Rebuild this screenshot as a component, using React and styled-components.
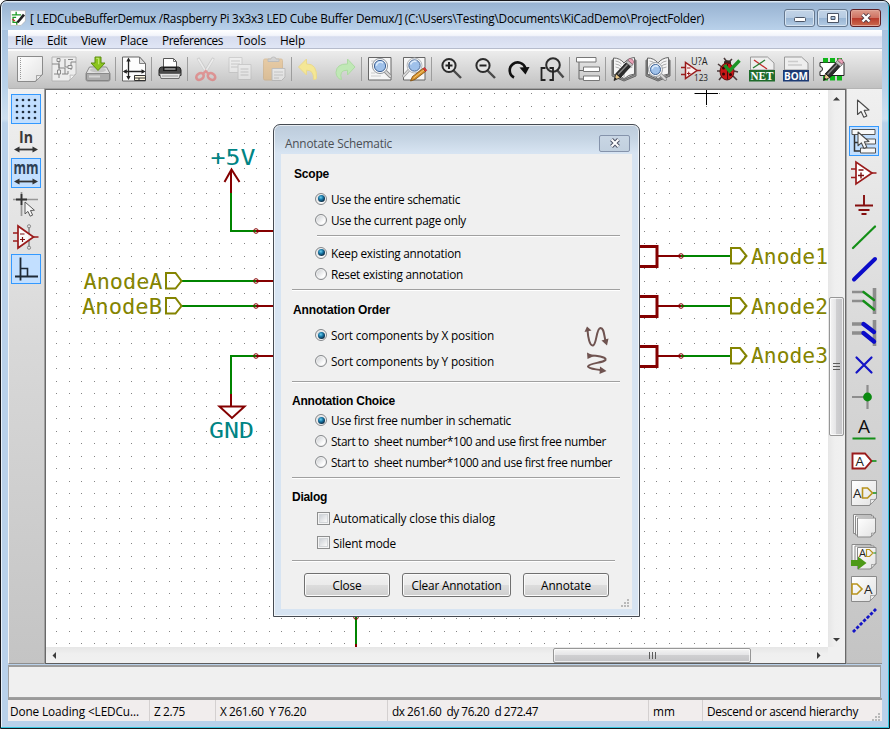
import React, { useLayoutEffect, useRef, useState } from 'react';
import styled, { createGlobalStyle, css } from 'styled-components';

const GlobalStyle = createGlobalStyle`
  * { box-sizing: border-box; }
  html, body { margin: 0; padding: 0; background: #fff; overflow: hidden; }
  body { font: 12px 'Open Sans', 'Noto Sans', sans-serif; color: #000; }
`;

/* ---------- text fitted to a measured width ---------- */

const FitSpan = styled.span`
  display: inline-block;
  white-space: pre;
  line-height: 16px;
  flex: none;
`;

function Fit({ w, children }) {
  const ref = useRef(null);
  const [spacing, setSpacing] = useState(0);
  useLayoutEffect(() => {
    const natural = ref.current.getBoundingClientRect().width;
    setSpacing((w - natural) / String(children).length);
  }, [w, children]);
  return (
    <FitSpan ref={ref} style={{ letterSpacing: `${spacing}px` }}>
      {children}
    </FitSpan>
  );
}

/* ---------- window frame ---------- */

const Window = styled.div`
  position: relative;
  display: flex;
  flex-direction: column;
  width: 890px;
  height: 729px;
  padding: 0 7px;
  border: 1px solid #17171c;
  border-radius: 7px 7px 0 0;
  background: linear-gradient(#99b4d1 0, #a9c3e0 30px, #bcd4ea 90px, #cfe0f0 118px, #b9d1ea 122px);
  box-shadow: inset -1px -1px 0 #35c6de, inset 1px 1px 0 #e8f1fa;
  font-size: 11.8px;
`;

const TitleBar = styled.div`
  display: flex;
  align-items: center;
  height: 29px;
  background: linear-gradient(#dbe7f3 0 1px, #98b3d2 2px, #b9d1ea 100%);
  margin: 0 -6px;
  padding: 5px 7px 0 8px;
  border-radius: 6px 6px 0 0;
`;

const Title = styled.div`
  flex: 1;
  padding-left: 4px;
`;

const Captions = styled.div`
  display: flex;
  gap: 2px;
`;

const CaptionButton = styled.div`
  display: flex;
  align-items: center;
  justify-content: center;
  width: 31px;
  height: 18px;
  border: 1px solid ${(p) => (p.$danger ? '#5e1f25' : '#65788f')};
  border-radius: 3px;
  box-shadow: inset 0 0 0 1px ${(p) => (p.$danger ? '#e2a597' : '#d7e4f1')};
  background: ${(p) =>
    p.$danger
      ? 'linear-gradient(#dd9c8c, #cf7262 48%, #b8392a 50%, #cb6a4e)'
      : 'linear-gradient(#c3d4e7, #b6cbe2 48%, #98b4d3 50%, #b4cce4)'};
`;

const MenuBar = styled.div`
  display: flex;
  align-items: center;
  gap: 14px;
  height: 19px;
  padding: 1px 7px 0;
  border-bottom: 1px solid #b6bccc;
  background: linear-gradient(#fff, #f3f5fb 30%, #d6dcee 38%, #e0e6f5);
`;

const ToolBar = styled.div`
  display: flex;
  align-items: center;
  height: 39px;
  padding: 0 5px 1px;
  border-top: 2px solid #fbfbfb;
  background: linear-gradient(#ececec, #d9d9d9 45%, #c1c1c1);
`;

const ToolButton = styled.div`
  display: flex;
  align-items: center;
  justify-content: center;
  width: 34px;
  height: 34px;
  opacity: ${(p) => (p.$faded ? 0.4 : 1)};
  svg { display: block; }
`;

const ToolSep = styled.div`
  width: 2px;
  height: 24px;
  border-left: 1px solid #9d9d9d;
`;

const Middle = styled.div`
  display: flex;
  height: 576px;
`;

const SideBar = styled.div`
  display: flex;
  flex-direction: column;
  align-items: center;
  gap: 2px;
  width: 36px;
  padding-top: 5px;
  padding-right: 1px;
  border-top: 1px solid #b4b4b4;
  border-bottom: 1px solid #8e8e8e;
  border-left: 1px solid ${(p) => (p.$side === 'right' ? '#a9a9a9' : '#f4f4f4')};
  background: linear-gradient(#f0f0f0, #d8d8d8 45%, #c4c4c4);
`;

const SideButton = styled.div`
  display: flex;
  align-items: center;
  justify-content: center;
  width: 30px;
  height: 30px;
  flex: none;
  ${(p) =>
    p.$on &&
    css`
      border: 1px solid #3399ff;
      background: #c2dfff;
    `}
  svg { display: block; flex: none; }
`;

const CanvasFrame = styled.div`
  flex: 1;
  display: grid;
  grid-template: 557px 16px / 782px 17px;
  border-style: solid;
  border-width: 1px 0 0 1px;
  border-color: #a0a0a0;
  box-shadow: inset 1px 1px 0 #696969, inset 0 -1px 0 #5d5d5d, inset -1px 0 0 #696969;
  padding: 1px;
  background: #f0f0f0;
`;

const Sheet = styled.svg`
  display: block;
  background: #fff;
`;

const ScrollTrack = styled.div`
  display: flex;
  align-items: center;
  flex-direction: ${(p) => (p.$vertical ? 'column' : 'row')};
  background: linear-gradient(${(p) => (p.$vertical ? '90deg' : '180deg')}, #e6e6e6, #efefef 40%, #f1f1f1);
  ${(p) => (p.$vertical ? 'padding: 0 1px 0 0;' : '')}
`;

const ScrollEnd = styled.div`
  display: flex;
  align-items: center;
  justify-content: center;
  width: 16px;
  height: 16px;
`;

const ScrollGap = styled.div`
  flex: 0 0 ${(p) => p.$size}px;
`;

const Thumb = styled.div`
  display: flex;
  align-items: center;
  justify-content: center;
  flex: 0 0 ${(p) => p.$size}px;
  ${(p) => (p.$vertical ? 'width: 15px;' : 'height: 15px;')}
  border: 1px solid #979797;
  border-radius: 2px;
  box-shadow: inset 0 0 0 1px rgba(255, 255, 255, 0.7);
  background: linear-gradient(${(p) => (p.$vertical ? '90deg' : '180deg')}, #f4f4f4, #e4e4e6 48%, #cfcfd1 50%, #c5c5c8);
`;

const MessagePanel = styled.div`
  height: 33px;
  border: 1px solid #a0a0a0;
  border-top: 2px solid #9c9c9c;
  background: #f0f0f0;
  margin-top: 1px;
  margin-right: 1px;
`;

const StatusBar = styled.div`
  display: grid;
  grid-template-columns: 141px 66px 172px 261px 54px 1fr;
  align-items: stretch;
  height: 23px;
  border-top: 2px solid #9a9a9a;
  background: #f1eded;
`;

const StatusCell = styled.div`
  display: flex;
  align-items: center;
  padding: 1px 0 0 ${(p) => (p.$first ? 2 : 4)}px;
  border-left: ${(p) => (p.$first ? '0' : '1px solid #d4d0d0')};
`;

const StatusGrip = styled.div`
  margin: auto 1px 0 auto;
  height: 12px;
`;

/* ---------- dialog ---------- */

const Dialog = styled.div`
  position: absolute;
  left: 272px;
  top: 123px;
  width: 367px;
  height: 493px;
  padding: 0 7px 7px;
  border: 1px solid #454a52;
  border-radius: 7px 7px 0 0;
  background: linear-gradient(#bccbdb, #c6d5e4 14px, #d7e4f2 28px);
  box-shadow: inset 0 0 0 1px rgba(255, 255, 255, 0.65);
`;

const DialogTitle = styled.div`
  display: flex;
  align-items: center;
  justify-content: space-between;
  height: 29px;
  padding: 7px 2px 0 4px;
  color: #4b4f54;
`;

const DialogClose = styled.div`
  display: flex;
  align-items: center;
  justify-content: center;
  width: 31px;
  height: 17px;
  border: 1px solid #8593ab;
  border-radius: 2px;
  background: linear-gradient(#c9d6e4, #c1d0df);
`;

const DialogBody = styled.div`
  height: 455px;
  padding: 10px 11px 0;
  background: #f0f0f0;
`;

const Section = styled.div`
  height: ${(p) => p.$height}px;
`;

const Heading = styled.div`
  height: 20px;
  padding-left: ${(p) => p.$indent || 0}px;
  font: bold 12px 'Liberation Sans', Arial, sans-serif;
  display: flex;
  align-items: center;
`;

const Option = styled.div`
  display: flex;
  align-items: center;
  gap: ${(p) => (p.$check ? 3 : 4)}px;
  height: ${(p) => p.$height || 21}px;
  padding-left: ${(p) => (p.$check ? 25 : 23)}px;
`;

const OptionBlock = styled.div`
  padding-top: ${(p) => p.$top || 0}px;
`;

const SortRow = styled.div`
  display: flex;
  justify-content: space-between;
  align-items: flex-start;
  padding-right: 11px;
`;

const SortArt = styled.svg`
  display: block;
  margin-top: 5px;
`;

const Radio = styled.span`
  display: flex;
  align-items: center;
  justify-content: center;
  width: 12px;
  height: 12px;
  border: 1px solid #85888b;
  border-radius: 50%;
  background: linear-gradient(135deg, #c6c9cd, #fdfdfd 70%);
  box-shadow: inset 0 0 0 1px #f2f2f2;
  &::after {
    content: '';
    display: ${(p) => (p.$on ? 'block' : 'none')};
    width: 7px;
    height: 7px;
    border-radius: 50%;
    background: radial-gradient(circle at 40% 35%, #6ed0ee 0, #1878a8 35%, #0c2c45 72%);
  }
`;

const Check = styled.span`
  width: 13px;
  height: 13px;
  border: 1px solid #8e8f8f;
  background: linear-gradient(135deg, #c0c5cc, #f6f6f6 75%);
  box-shadow: inset 0 0 0 1px #f4f4f4, inset 0 0 0 2px #d3d6d9;
`;

const Rule = styled.div`
  height: 2px;
  margin-left: ${(p) => p.$left || 0}px;
  width: ${(p) => p.$width}px;
  border-top: 1px solid #a0a0a0;
  border-bottom: 1px solid #fff;
`;

const Actions = styled.div`
  display: flex;
  gap: 12px;
  padding: 11px 0 0 12px;
`;

const Button = styled.div`
  display: flex;
  align-items: center;
  justify-content: center;
  width: ${(p) => p.$width}px;
  height: 24px;
  border: 1px solid #707070;
  border-radius: 3px;
  box-shadow: inset 0 0 0 1px #fbfbfb;
  background: linear-gradient(#f2f2f2, #ebebeb 48%, #dddddd 50%, #cfcfcf);
`;

const DialogGrip = styled.div`
  display: flex;
  justify-content: flex-end;
  padding-top: 2px;
  margin-right: -9px;
`;

/* ---------- icon helpers ---------- */

const IconSvg = styled.svg`
  overflow: visible;
`;

const Ico = ({ children }) => (
  <IconSvg width="26" height="26" viewBox="0 0 26 26" fill="none">
    {children}
  </IconSvg>
);

const Page = ({ x = 0.5, y = 0.5, w = 25, h = 25, f = 7, stroke = '#8a8a8a', fill = 'url(#paper)' }) => (
  <g strokeLinejoin="round">
    <path d={`M${x} ${y}h${w}v${h - f}l${-f} ${f}h${f - w}z`} fill={fill} stroke={stroke} />
    <path d={`M${x + w} ${y + h - f}q-2 2-${f - 1} 1q1 4-1 ${f - 1}z`} fill="#f4f4f4" stroke={stroke} strokeWidth=".8" />
  </g>
);

const Paper = () => (
  <linearGradient id="paper" x1="0" y1="0" x2="1" y2="1">
    <stop offset="0" stopColor="#ffffff" />
    <stop offset="1" stopColor="#e2e2e2" />
  </linearGradient>
);

const Lens = ({ x, y, r }) => (
  <g>
    <path d={`M${x + r * 0.7} ${y + r * 0.7}l5.5 5.5`} stroke="#8f8f8f" strokeWidth="3.6" strokeLinecap="round" />
    <path d={`M${x + r * 0.7} ${y + r * 0.7}l5.5 5.5`} stroke="#dadada" strokeWidth="1.8" strokeLinecap="round" />
    <circle cx={x} cy={y} r={r} fill="#a9c8ec" stroke="#f5f5f5" strokeWidth="2.6" />
    <circle cx={x} cy={y} r={r + 1} stroke="#7d848b" strokeWidth=".8" />
    <circle cx={x} cy={y} r={r - 1} fill="#9fc1ea" stroke="#3f6396" strokeWidth="1" />
    <path d={`M${x - r * 0.55} ${y - 0.3}a${r * 0.6} ${r * 0.6} 0 0 1 ${r} -${r * 0.4}`} stroke="#dcebfb" strokeWidth="1.6" />
  </g>
);

const Book = () => (
  <g stroke="#666" strokeLinejoin="round">
    <path d="M1 4.500l1-1v15l11 5 11-5V3.500l1 1V20l-12 5L1 20z" fill="#999" />
    <path d="M2.500 2Q9 2 13 7Q17 2 23.500 1.500V18Q17 18.500 13 23Q9 18.500 2.500 18.500z" fill="#f5f5f5" />
    <path d="M13 7V23M4.500 5q4 .5 6 3M4.500 8q4 .5 6 3M15.500 8q2-2.500 6-3M15.500 11q2-2.500 6-3M15.500 14q2-2.500 6-3M4.500 11q4 .5 6 3" stroke="#9a9a9a" strokeWidth=".8" />
  </g>
);

const Pencil = () => (
  <g>
    <path d="M3 24.500L5 17.500L9.500 21.500z" fill="#e9c88a" stroke="#222" strokeWidth=".8" />
    <path d="M3 24.500l1-3 1.800 1.600z" fill="#111" />
    <path d="M5 17.500L15 7L19.500 10.500L9.500 21.500z" fill="#2c2c2c" stroke="#111" strokeWidth=".8" />
    <path d="M7 18.500L16.500 8.500" stroke="#888" strokeWidth="1.400" />
    <path d="M15 6.500l2-2.200 5 4.200-2 2z" fill="#c4c4c4" stroke="#555" strokeWidth=".7" />
    <path d="M17 4.300l1.500-1.800q3-.5 4.500 3.500l-1.500 2.200z" fill="#e9a3b8" stroke="#8d5968" strokeWidth=".7" />
  </g>
);

const Cursor = ({ x, y, s = 1 }) => (
  <path
    transform={`translate(${x} ${y}) scale(${s})`}
    d="M0 0L0 14.500L3.600 11.500L6.300 17.300L9.300 16L6.700 10.400L11.500 10z"
    fill="#f6f6f6"
    stroke="#4a4a4a"
    strokeWidth="1.1"
    strokeLinejoin="round"
  />
);

const GlyphText = ({ children, x, y, size = 10, fill = '#222', weight = 400, len, font = 'Open Sans' }) => (
  <text
    x={x}
    y={y}
    fontSize={size}
    fontWeight={weight}
    fill={fill}
    stroke="none"
    textLength={len}
    lengthAdjust="spacingAndGlyphs"
    fontFamily={`'${font}', sans-serif`}
  >
    {children}
  </text>
);

const Glass = ({ minus }) => (
  <g transform="translate(2.500 .5)">
    <path d="M14 14l7.500 7.500" stroke="#4a4a4a" strokeWidth="2.400" />
    <circle cx="9.500" cy="9" r="6.600" stroke="#2c2c2c" strokeWidth="2" fill="#e3e3e3" />
    <path d={minus ? 'M6 9h7' : 'M6 9h7M9.500 5.500v7'} stroke="#222" strokeWidth="2" />
  </g>
);

/* ---------- top toolbar icons ---------- */

const NewIcon = () => (
  <Ico>
    <defs><Paper /></defs>
    <Page />
    <path d="M3.500 2v22" stroke="#999" strokeDasharray="1 1" />
  </Ico>
);

const OpenIcon = () => (
  <Ico>
    <Page x={1} y={1} w={24} h={24} stroke="#b4b4b4" fill="#ededed" />
    <path d="M1 8h7v4h6M8 4v18M14 3v8h6V6h5M14 12v6M11 18h6v-3M3 18h5M20 11v3M17 3.500h5" stroke="#858585" />
    <path d="M6 2.500h3v3H6zM6.500 14h3v4h-3zM17 9.500h4v3h-4z" fill="#eee" stroke="#8c8c8c" />
  </Ico>
);

const SaveIcon = () => (
  <Ico>
    <path d="M4.500 11h17l3.500 6.500v6q0 1.500-1.500 1.500h-21Q1 25 1 23.500v-6z" fill="#e2e2e2" stroke="#8a8a8a" />
    <path d="M1.500 17.500h23v5.500q0 1.500-1.500 1.500H3q-1.500 0-1.500-1.500z" fill="#adadad" stroke="#7a7a7a" strokeWidth=".8" />
    <path d="M4 20.500h11" stroke="#d5d5d5" strokeWidth="2" />
    <ellipse cx="13" cy="14" rx="8" ry="2.500" fill="#c6c6c6" />
    <path d="M10 1h6v6h4l-7 7.500L6 7h4z" fill="#8bc41d" stroke="#5d8c12" />
    <path d="M11.300 2.300h2.400v6" stroke="#c9ec7d" />
  </Ico>
);

const PageSetupIcon = () => (
  <Ico>
    <path d="M1.500 1h17l6 6.500V25h-23z" fill="#fdfdfd" stroke="#666" />
    <path d="M18.500 1v6.500h6z" fill="#ddd" stroke="#666" strokeWidth=".8" />
    <path d="M7.500 3v19M3 15.500h20" stroke="#222" strokeWidth="1.300" />
    <path d="M7.500 1.500l-2.200 4h4.400zM7.500 24l-2.200-4h4.400zM1.800 15.500l4-2.200v4.400zM24.500 15.500l-4-2.200v4.400z" fill="#222" />
    <path d="M13.500 19.500h11v5h-11zM13.500 22h11M18 22v2.500" fill="#fff8e0" stroke="#333" />
  </Ico>
);

const PrintIcon = () => (
  <Ico>
    <path d="M6.500 12V2.500h10l3 3V12z" fill="#fff" stroke="#555" />
    <path d="M16.500 2.500v3h3" stroke="#777" />
    <path d="M4.500 11h17q2 0 2.500 3v5.500H2V14q.5-3 2.500-3z" fill="#4a4a4a" stroke="#222" />
    <path d="M6 11h14v4H6z" fill="#1b1b1b" />
    <path d="M7.500 13h11" stroke="#eee" />
    <path d="M2.500 17.500h21l-1.500 5H4z" fill="#e4e4e4" stroke="#555" strokeWidth=".8" />
    <path d="M5 20h16" stroke="#999" />
  </Ico>
);

const CutIcon = () => (
  <Ico>
    <path d="M5 2l9.500 16M20.500 2L11 18" stroke="#b0b0b0" strokeWidth="3" />
    <path d="M5.300 3l9 15M20.200 3L11 18" stroke="#fff" strokeWidth="1.600" />
    <ellipse cx="7" cy="20.500" rx="4" ry="3" transform="rotate(-35 7 20.500)" stroke="#ee3a3a" strokeWidth="2.600" />
    <ellipse cx="18.500" cy="20.500" rx="4" ry="3" transform="rotate(35 18.500 20.500)" stroke="#ee3a3a" strokeWidth="2.600" />
    <path d="M10 18l2.700-3 2.700 3" stroke="#ee3a3a" strokeWidth="2.500" />
  </Ico>
);

const CopyIcon = () => (
  <Ico>
    <path d="M2 1.500h13v15H2z" fill="#fff" stroke="#b0b0b0" />
    <path d="M4 5h9M4 8h9M4 11h9" stroke="#c4c4c4" strokeWidth="1.500" />
    <path d="M11 8.500h13v15H11z" fill="#fff" stroke="#b0b0b0" />
    <path d="M13.500 13h8M13.500 16h8M13.500 19h8" stroke="#c4c4c4" strokeWidth="1.500" />
  </Ico>
);

const PasteIcon = () => (
  <Ico>
    <rect x="2.500" y="3" width="19" height="21" rx="1.500" fill="#efa94a" stroke="#cc9040" />
    <path d="M7 5.500V3h3q0-2 2.500-2T15 3h3v2.500z" fill="#bbb" stroke="#888" />
    <path d="M11 12.500h13V21l-3.500 3.500H11z" fill="#fff" stroke="#999" />
    <path d="M13 16h9M13 19h9M13 22h5" stroke="#aaa" />
  </Ico>
);

const UndoIcon = () => (
  <Ico>
    <path d="M9.500 3v5q11-.5 10 14.500q0 1-3 1Q17 14 9.500 14.200V19L1.500 11z" fill="#f4e795" stroke="#ead98d" strokeLinejoin="round" />
  </Ico>
);

const RedoIcon = () => (
  <Ico>
    <path d="M16.500 3v5q-11-.5-11.500 8.500q.5 6 5.500 7Q7.500 14 16.500 14.200V19L24 11z" fill="#c0e8b6" stroke="#aedba3" strokeLinejoin="round" />
  </Ico>
);

const FindIcon = () => (
  <Ico>
    <path d="M1.500 1.500h22.500v22.500H1.500z" fill="#f6f6f6" stroke="#666" />
    <path d="M4 5h4M4 8h3M4 17h4M4 20h10" stroke="#ccc" />
    <Lens x={13} y={10} r={6.600} />
  </Ico>
);

const ReplaceIcon = () => (
  <Ico>
    <path d="M2.500 1.500h21.500v22.500H2.500z" fill="#f6f6f6" stroke="#666" />
    <path d="M8 14L2.500 20" stroke="#999" strokeWidth="3" strokeLinecap="round" />
    <path d="M8 14L2.500 20" stroke="#ddd" strokeWidth="1.500" strokeLinecap="round" />
    <circle cx="13.500" cy="9.500" r="6.500" fill="#9fc1ea" stroke="#f0f0f0" strokeWidth="2.400" />
    <circle cx="13.500" cy="9.500" r="7.500" stroke="#9a9fa5" strokeWidth=".7" />
    <circle cx="13.500" cy="9.500" r="5.600" stroke="#3f6396" strokeWidth="1" />
    <path d="M9.500 8.500a4.500 4.500 0 0 1 6-3" stroke="#dcebfb" strokeWidth="1.600" />
    <path d="M9.500 25l2-4.500L22 12.500l2.500 3L14 23.500z" fill="#d89229" stroke="#7b4a0c" strokeWidth=".8" />
    <path d="M22 12.500l1.500-1 2.300 2.800-1.300 1.200z" fill="#e33" stroke="#922" strokeWidth=".6" />
    <path d="M12.500 22L23 14" stroke="#f3c878" />
  </Ico>
);

const ZoomInIcon = () => <Ico><Glass /></Ico>;
const ZoomOutIcon = () => <Ico><Glass minus /></Ico>;

const RedrawIcon = () => (
  <Ico>
    <path d="M9 21.500A8 8 0 1 1 20.500 12.500" stroke="#111" strokeWidth="2.600" />
    <path d="M14.500 11.500l10-.5-4 7.500z" fill="#111" />
  </Ico>
);

const ZoomFitIcon = () => (
  <Ico>
    <path d="M18 14l6.500 7.500" stroke="#4a4a4a" strokeWidth="2.400" />
    <circle cx="14" cy="9" r="6.800" stroke="#2c2c2c" strokeWidth="2" fill="#dcdcdc" />
    <path d="M6.500 12h-4v12h4M10.500 12h3.500v12h-3.500" stroke="#222" strokeWidth="1.800" />
  </Ico>
);

const HierarchyIcon = () => (
  <Ico>
    <path d="M4 6v17h5M4 14.500h5" stroke="#666" />
    <g fill="#fff" stroke="#777">
      <path d="M1.500 1.500h19.500v4.500H1.500zM8.500 11h16v4.500h-16zM8.500 20h16v4.500h-16z" />
    </g>
  </Ico>
);

const LibEditIcon = () => <Ico><Book /><Pencil /></Ico>;
const LibViewIcon = () => <Ico><Book /><Lens x={10.500} y={13.500} r={6} /></Ico>;

const AnnotateIcon = () => (
  <Ico>
    <path d="M4.500 6.500v16l11.500-8z" fill="#fbeeee" stroke="#9a1b1b" strokeWidth="1.500" />
    <path d="M0 11.500h4M0 18.500h4M16 14.500h4" stroke="#9a1b1b" strokeWidth="1.300" />
    <path d="M6 12h3.500M6 17.500h3.500M7.700 15.700v3.600" stroke="#9a1b1b" />
    <GlyphText x={10} y={8.500} size={10} len={16.500}>U?A</GlyphText>
    <GlyphText x={13} y={25} size={9.500} len={14}>123</GlyphText>
  </Ico>
);

const BugIcon = () => (
  <Ico>
    <path d="M3 8l5 4M2 15h6M4 24l4-5M9 2l3 4M17 3l-3 3M19 15l4 1M18 20l4 4" stroke="#4a3a3a" strokeWidth="1.600" />
    <path d="M9 5.500q3.500-2.500 7 0v3H9z" fill="#3b2a26" />
    <ellipse cx="12" cy="15.500" rx="7" ry="8.500" fill="#c91616" stroke="#5f0c0c" />
    <path d="M12.500 8v15.500" stroke="#490a0a" />
    <circle cx="8.500" cy="12" r="1.500" fill="#380606" />
    <circle cx="8.500" cy="18" r="1.500" fill="#380606" />
    <circle cx="15.500" cy="18.500" r="1.500" fill="#380606" />
    <path d="M9.500 9l5 6L24.500 4.500" stroke="#1c9426" strokeWidth="3.400" />
  </Ico>
);

const NetIcon = () => (
  <Ico>
    <path d="M1.500 14V1h17l6.500 6v7z" fill="#eee" stroke="#999" />
    <path d="M5 4l13 9" stroke="#c02828" strokeWidth="1.300" />
    <path d="M4 12L16 4" stroke="#2a7d32" strokeWidth="1.300" />
    <path d="M0 14h26v11.500H0z" fill="#1f6b2b" />
    <GlyphText x={1.500} y={24} size={12.500} weight={700} fill="#fff" len={23} font="Liberation Serif">NET</GlyphText>
  </Ico>
);

const BomIcon = () => (
  <Ico>
    <path d="M1.500 14V1h17l6.500 6v7z" fill="#eee" stroke="#999" />
    <path d="M5 5.500h10M5 9h14" stroke="#ccc" strokeWidth="1.500" />
    <path d="M0 14h26v11.500H0z" fill="#1d3b75" />
    <GlyphText x={1} y={23.800} size={11} weight={700} fill="#fff" len={24}>BOM</GlyphText>
  </Ico>
);

const FootprintIcon = () => (
  <Ico>
    <path d="M1 6.500h24v13H1v-4q2.500 0 2.500-2.500T1 10.500z" fill="#fff" stroke="#222" />
    <path d="M4 2h5v4.500H4zM11 2h5v4.500h-5zM18 2h5v4.500h-5zM4 20h5v4.500H4zM11 20h5v4.500h-5zM18 20h5v4.500h-5z" fill="#10b51a" />
    <g transform="translate(1.500 0)"><Pencil /></g>
  </Ico>
);

/* ---------- side bar icons ---------- */

const GridIcon = () => (
  <Ico>
    {[4, 10, 16, 22].map((y) =>
      [4, 10, 16, 22].map((x) => <circle key={`${x}-${y}`} cx={x} cy={y} r="1.350" fill="#22303f" />)
    )}
  </Ico>
);

const Arrows = () => (
  <g>
    <path d="M4 21.500h18" stroke="#333" strokeWidth="1.800" />
    <path d="M1 21.500l5.500-3v6zM25 21.500l-5.500-3v6z" fill="#333" />
  </g>
);

const InchIcon = () => (
  <Ico>
    <GlyphText x={6} y={15} size={16} weight={700} fill="#3a3a3a" len={14}>In</GlyphText>
    <Arrows />
  </Ico>
);

const MmIcon = () => (
  <Ico>
    <GlyphText x={0.500} y={14} size={17} weight={700} fill="#2c4055" len={25}>mm</GlyphText>
    <Arrows />
  </Ico>
);

const CursorShapeIcon = () => (
  <Ico>
    <path d="M0 7.500h25M8.500 0v24" stroke="#979797" strokeWidth="1.700" />
    <path d="M3 7.500h11M8.500 2v11" stroke="#333" strokeWidth="1.800" />
    <Cursor x={12} y={10} s={0.820} />
  </Ico>
);

const HiddenPinIcon = () => (
  <Ico>
    <path d="M16 3v20" stroke="#888" strokeWidth="1.500" />
    <circle cx="16" cy="2.300" r="1.600" stroke="#888" />
    <circle cx="16" cy="23.700" r="1.600" stroke="#888" />
    <path d="M5 2v22l15.500-11z" fill="#fff" fillOpacity=".85" stroke="#9a1b1b" strokeWidth="1.700" />
    <path d="M0 9h5M0 17h5M20 13h5.500" stroke="#9a1b1b" strokeWidth="1.500" />
    <path d="M7 10h4.500M7 15.500h5M9.500 13v5" stroke="#7b1010" strokeWidth="1.200" />
  </Ico>
);

const OrthoIcon = () => (
  <Ico>
    <path d="M7.500 1.500v23M2 20.500h23" stroke="#1f2a36" strokeWidth="1.800" />
    <path d="M7.500 12.500h7v8" stroke="#1f2a36" strokeWidth="1.600" />
  </Ico>
);

const SelectIcon = () => <Ico><Cursor x={6.500} y={4} /></Ico>;

const NavigateIcon = () => (
  <Ico>
    <path d="M3.500 6v17h6M3.500 14.500h6" stroke="#333" strokeWidth="1.500" />
    <path d="M1 1.500h23v5H1zM13 11h11.500v5H13zM9.500 20h15v5h-15z" fill="#f8f8f8" stroke="#555" />
    <Cursor x={7} y={4} s={0.950} />
  </Ico>
);

const ComponentIcon = () => (
  <Ico>
    <path d="M5 2v22l16-11z" fill="#fff" stroke="#9a1b1b" strokeWidth="1.700" />
    <path d="M0 9h5M0 17.500h5M21 13h4.500" stroke="#9a1b1b" strokeWidth="1.600" />
    <path d="M7.500 10h5M7 15.500h6M10 12.500v6" stroke="#7b1010" strokeWidth="1.400" />
  </Ico>
);

const PowerIcon = () => (
  <Ico>
    <path d="M13 3v10M4 13.500h18M7.500 18h11M10.500 22h5" stroke="#850f0f" strokeWidth="1.900" />
  </Ico>
);

const WireIcon = () => <Ico><path d="M2 24L24 2.500" stroke="#138f17" strokeWidth="2.200" strokeLinecap="round" /></Ico>;
const BusIcon = () => <Ico><path d="M3 23.500L24 3" stroke="#0b0bc9" strokeWidth="4" strokeLinecap="round" /></Ico>;

const EntryIcon = ({ color, width }) => (
  <Ico>
    <path d="M1 4h12M1 13h12" stroke="#8d8d8d" strokeWidth={width > 3 ? 3.5 : 2.5} />
    <path d="M23.500 0v26" stroke="#8d8d8d" strokeWidth="3.600" />
    <path d="M12.500 4L23 12M12.500 13L23 21.500" stroke={color} strokeWidth={width} strokeLinecap="round" />
  </Ico>
);

const NoConnectIcon = () => <Ico><path d="M5.500 5.500l15 15M20.500 5.500l-15 15" stroke="#1414c6" strokeWidth="2.200" strokeLinecap="round" /></Ico>;

const JunctionIcon = () => (
  <Ico>
    <path d="M1 13h15M16.500 1v24" stroke="#8d8d8d" strokeWidth="2.200" />
    <circle cx="16.500" cy="13" r="4.400" fill="#0b8a10" />
  </Ico>
);

const NetNameIcon = () => (
  <Ico>
    <GlyphText x={7} y={16.500} size={18} fill="#111" len={12}>A</GlyphText>
    <path d="M1.500 22.500h23" stroke="#138f17" strokeWidth="2" />
  </Ico>
);

const GlobalLabelIcon = () => (
  <Ico>
    <path d="M1.500 5.500h12.500l6.500 7.500-6.500 7.500H1.500z" fill="#fff" stroke="#9a1b1b" strokeWidth="1.900" />
    <path d="M21 13h4.500" stroke="#138f17" strokeWidth="1.600" />
    <GlyphText x={4.500} y={17.800} size={13.500} fill="#222" len={8.500}>A</GlyphText>
  </Ico>
);

const HierLabelIcon = () => (
  <Ico>
    <Page />
    <GlyphText x={2} y={18} size={13.500} fill="#222" len={8.500}>A</GlyphText>
    <path d="M11.500 8h5l5 5-5 5h-5z" stroke="#b8931c" strokeWidth="1.600" />
    <path d="M22 13h3.500" stroke="#138f17" strokeWidth="1.500" />
  </Ico>
);

const SheetsIcon = () => (
  <Ico>
    <Page x={2.5} y={2.5} w={18} h={19} f={5} />
    <Page x={4.5} y={4} w={18} h={19} f={5} />
    <Page x={6.5} y={6} w={18} h={19} f={5} />
  </Ico>
);

const ImportLabelIcon = () => (
  <Ico>
    <Page x={1} y={0.5} w={19} h={19} f={5} />
    <Page x={4} y={2} w={19} h={19} f={5} />
    <Page x={6.5} y={3.5} w={18.5} h={21.5} f={5.5} />
    <GlyphText x={8} y={12.500} size={11} fill="#222" len={7}>A</GlyphText>
    <path d="M15.500 5.500h3l3.500 3.500-3.500 3.500h-3z" stroke="#b8931c" strokeWidth="1.200" />
    <path d="M22.500 9H25" stroke="#138f17" />
    <path d="M0 16h7v-3.500l8.500 6.500L7 25.500V22H0z" fill="#4d9a18" />
  </Ico>
);

const SheetPinIcon = () => (
  <Ico>
    <Page />
    <path d="M1 8h5l5 5-5 5H1z" stroke="#b8931c" strokeWidth="1.600" />
    <GlyphText x={13} y={18} size={13.500} fill="#222" len={8.500}>A</GlyphText>
  </Ico>
);

const DashIcon = () => (
  <Ico>
    <path d="M2 24L25 1" stroke="#1414c6" strokeWidth="2.800" strokeDasharray="3.200 1.700" />
  </Ico>
);

const Grip = () => (
  <svg width="9" height="9" viewBox="0 0 9 9" fill="#b9b9b9">
    <path d="M6 0h2v2H6zM3 3h2v2H3zM6 3h2v2H6zM0 6h2v2H0zM3 6h2v2H3zM6 6h2v2H6z" />
  </svg>
);

const triangles = {
  up: 'M0 5.500L3.500 2L7 5.500z',
  down: 'M0 2h7L3.500 5.500z',
  left: 'M5 0v7L1.500 3.500z',
  right: 'M2 0v7l3.500-3.500z',
};

const Triangle = ({ dir }) => (
  <svg width="7" height="7" viewBox="0 0 7 7" fill="#3c3c3c">
    <path d={triangles[dir]} />
  </svg>
);

const ScrollRidges = ({ vertical }) => (
  <svg width="9" height="9" viewBox="0 0 9 9" shapeRendering="crispEdges" stroke="#5c5c5c">
    <path d={vertical ? 'M1 1.500h7M1 4.500h7M1 7.500h7' : 'M1.500 1v7M4.500 1v7M7.500 1v7'} />
  </svg>
);

const topTools = [
  [NewIcon, OpenIcon, SaveIcon],
  [PageSetupIcon],
  [PrintIcon],
  [CutIcon, CopyIcon, PasteIcon],
  [UndoIcon, RedoIcon],
  [FindIcon, ReplaceIcon],
  [ZoomInIcon, ZoomOutIcon, RedrawIcon, ZoomFitIcon],
  [HierarchyIcon],
  [LibEditIcon, LibViewIcon],
  [AnnotateIcon, BugIcon, NetIcon, BomIcon],
  [FootprintIcon],
];
const disabledTools = [CutIcon, CopyIcon, PasteIcon];

const leftTools = [
  [GridIcon, true], [InchIcon], [MmIcon, true], [CursorShapeIcon], [HiddenPinIcon], [OrthoIcon, true],
];

const GreenEntry = () => <EntryIcon color="#138f17" width={2.4} />;
const BlueEntry = () => <EntryIcon color="#0b0bc9" width={4.4} />;

const rightTools = [
  [SelectIcon], [NavigateIcon, true], [ComponentIcon], [PowerIcon], [WireIcon], [BusIcon],
  [GreenEntry], [BlueEntry], [NoConnectIcon], [JunctionIcon], [NetNameIcon], [GlobalLabelIcon],
  [HierLabelIcon], [SheetsIcon], [ImportLabelIcon], [SheetPinIcon], [DashIcon],
];

/* ---------- schematic ---------- */

const NetText = ({ x, y, w, color = '#848400', children }) => (
  <text
    x={x}
    y={y}
    textLength={w}
    lengthAdjust="spacingAndGlyphs"
    fontFamily="'DejaVu Sans Mono', monospace"
    fontSize="22"
    fill={color}
  >
    {children}
  </text>
);

const Pin = ({ x, y }) => <circle cx={x} cy={y} r="2.300" fill="none" stroke="#840000" />;

function Schematic() {
  return (
    <Sheet width="782" height="557" viewBox="46 90 782 557" fill="none">
      <defs>
        <pattern id="grid" x="56" y="93" width="25" height="25" patternUnits="userSpaceOnUse">
          <path d="M0 0h1v1H0zM13 0h1v1h-1zM0 13h1v1H0zM13 13h1v1h-1z" fill="#848484" shapeRendering="crispEdges" />
        </pattern>
      </defs>
      <rect x="46" y="90" width="782" height="557" fill="url(#grid)" />
      <g stroke="#008400" strokeWidth="2">
        <path d="M231 193v38h25M182 281h74M182 306h74M231 394v-38h25M356 617v27" />
        <path d="M681 256h50M681 306h50M681 356h50" />
      </g>
      <g stroke="#840000" strokeWidth="2">
        <path d="M256 231h18M256 281h18M256 306h18M256 356h18M231 193v-23M224.500 182l7-12.500 8 12.500M231 394v12M219.500 406.500h25l-12.500 11.500zM356 644v3" />
        <path d="M658 256h23M658 306h23M658 356h23" />
        <path d="M638 246.500h19v20H638M638 296.500h19v20H638M638 346.500h19v20H638" strokeWidth="3" />
      </g>
      <Pin x={256} y={231} /><Pin x={256} y={281} /><Pin x={256} y={306} /><Pin x={256} y={356} />
      <Pin x={681} y={256} /><Pin x={681} y={306} /><Pin x={681} y={356} /><Pin x={356} y={617} />
      <g stroke="#848400" strokeWidth="2">
        <path d="M166 273h9.500l6 8-6 7.500H166zM166 298h9.500l6 8-6 7.500H166z" />
        <path d="M731 248h9l6.500 8-6.500 7.500h-9zM731 298h9l6.500 8-6.500 7.500h-9zM731 348h9l6.500 8-6.500 7.500h-9z" />
      </g>
      <NetText x={210.5} y={165} w={45} color="#008484">+5V</NetText>
      <NetText x={209} y={438} w={45} color="#008484">GND</NetText>
      <NetText x={83.5} y={288.5} w={79}>AnodeA</NetText>
      <NetText x={82} y={313.5} w={80}>AnodeB</NetText>
      <NetText x={751} y={263.5} w={77}>Anode1</NetText>
      <NetText x={751} y={313.5} w={77}>Anode2</NetText>
      <NetText x={751} y={363} w={77}>Anode3</NetText>
      <path d="M695 93.500h23M706.500 90v15" stroke="#000" shapeRendering="crispEdges" />
    </Sheet>
  );
}

/* ---------- dialog ---------- */

const RadioOption = ({ on, w, height, children }) => (
  <Option $height={height}>
    <Radio $on={on} />
    <Fit w={w}>{children}</Fit>
  </Option>
);

const CheckOption = ({ w, height, children }) => (
  <Option $check $height={height}>
    <Check />
    <Fit w={w}>{children}</Fit>
  </Option>
);

const SortOrderArt = () => (
  <SortArt width="26" height="50" viewBox="0 0 26 50" fill="none" stroke="#6f5350" strokeWidth="2">
    <path d="M3.500 5C4 12 5.500 21 9 20.500C13 19 12 3.500 16.500 3C20 3 20 10 21.500 16" />
    <path d="M.5 7L3 1.500l4.500 4zM17.500 15.500l7-2-1.500 7z" fill="#6f5350" stroke="none" />
    <path d="M4 30.500C12 30 23 32 21.500 35C19 38 5 38 4 41.500C4.500 44 12 44 18 45.500" />
    <path d="M3 27.500l7 3.500-6.500 3zM16 41.500l6.500 4.500-7 3z" fill="#6f5350" stroke="none" />
  </SortArt>
);

function AnnotateDialog() {
  return (
    <Dialog>
      <DialogTitle>
        <Fit w={107}>Annotate Schematic</Fit>
        <DialogClose>
          <svg width="12" height="10" viewBox="0 0 12 10">
            <path d="M2.500 1.500l7 7M9.500 1.500l-7 7" stroke="#4e5366" strokeWidth="4" />
            <path d="M2.500 1.500l7 7M9.500 1.500l-7 7" stroke="#fff" strokeWidth="2" />
          </svg>
        </DialogClose>
      </DialogTitle>
      <DialogBody>
        <Section $height={71}>
          <Heading $indent={2}><Fit w={35}>Scope</Fit></Heading>
          <OptionBlock $top={4}>
            <RadioOption on w={129}>Use the entire schematic</RadioOption>
            <RadioOption w={135}>Use the current page only</RadioOption>
          </OptionBlock>
        </Section>
        <Rule $left={25} $width={303} />
        <Section $height={52}>
          <OptionBlock $top={5}>
            <RadioOption on w={130}>Keep existing annotation</RadioOption>
            <RadioOption w={132}>Reset existing annotation</RadioOption>
          </OptionBlock>
        </Section>
        <Rule $width={328} />
        <Section $height={90}>
          <OptionBlock $top={9}>
            <Heading $indent={1}><Fit w={97}>Annotation Order</Fit></Heading>
          </OptionBlock>
          <SortRow>
            <OptionBlock $top={2}>
              <RadioOption on height={26} w={163}>Sort components by X position</RadioOption>
              <RadioOption height={26} w={163}>Sort components by Y position</RadioOption>
            </OptionBlock>
            <SortOrderArt />
          </SortRow>
        </Section>
        <Rule $width={328} />
        <Section $height={94}>
          <OptionBlock $top={8}>
            <Heading><Fit w={103}>Annotation Choice</Fit></Heading>
          </OptionBlock>
          <RadioOption on height={18} w={180}>Use first free number in schematic</RadioOption>
          <RadioOption height={23} w={275}>{'Start to  sheet number*100 and use first free number'}</RadioOption>
          <RadioOption height={19} w={281}>{'Start to  sheet number*1000 and use first free number'}</RadioOption>
        </Section>
        <Rule $width={328} />
        <Section $height={81}>
          <OptionBlock $top={8}>
            <Heading><Fit w={35}>Dialog</Fit></Heading>
          </OptionBlock>
          <CheckOption w={162} height={22}>Automatically close this dialog</CheckOption>
          <CheckOption w={63} height={27}>Silent mode</CheckOption>
        </Section>
        <Rule $width={323} />
        <Actions>
          <Button $width={86}><Fit w={29}>Close</Fit></Button>
          <Button $width={109}><Fit w={90}>Clear Annotation</Fit></Button>
          <Button $width={86}><Fit w={50}>Annotate</Fit></Button>
        </Actions>
        <DialogGrip><Grip /></DialogGrip>
      </DialogBody>
    </Dialog>
  );
}

const AppIcon = () => (
  <svg width="16" height="16" viewBox="0 0 26 26" fill="none">
    <path d="M1 1h24v17l-7 7H1z" fill="#fff" stroke="#aaa" />
    <path d="M3 8h7V3M10 12H5v8h6v4M10 8h8" stroke="#1d9a25" strokeWidth="2.200" />
    <path d="M4 15l4 3" stroke="#c22" strokeWidth="2" />
    <path d="M10 20L21 6l3.500 3L14 21z" fill="#222" />
  </svg>
);

const menus = [['File', 18], ['Edit', 20], ['View', 25], ['Place', 28], ['Preferences', 61], ['Tools', 29], ['Help', 25]];

const statusCells = [
  ['Done Loading <LEDCu...', 129], ['Z 2.75', 31], ['X 261.60  Y 76.20', 86],
  ['dx 261.60  dy 76.20  d 272.47', 146], ['mm', 22], ['Descend or ascend hierarchy', 151],
];

export default function App() {
  return (
    <>
      <GlobalStyle />
      <Window>
        <TitleBar>
          <AppIcon />
          <Title>
            <Fit w={674}>{'[ LEDCubeBufferDemux /Raspberry Pi 3x3x3 LED Cube Buffer Demux/] (C:\\Users\\Testing\\Documents\\KiCadDemo\\ProjectFolder)'}</Fit>
          </Title>
          <Captions>
            <CaptionButton>
              <svg width="12" height="10"><rect x=".5" y="4.500" width="11" height="4" rx="1" fill="#fff" stroke="#4b5566" /></svg>
            </CaptionButton>
            <CaptionButton>
              <svg width="12" height="10"><path d="M.5.5h11v9H.500zM4 3.500h4v3H4z" fillRule="evenodd" fill="#fff" stroke="#4b5566" /></svg>
            </CaptionButton>
            <CaptionButton $danger>
              <svg width="12" height="10" viewBox="0 0 12 10">
                <path d="M2.500 1.500l7 7M9.500 1.500l-7 7" stroke="#4e3a44" strokeWidth="4" />
                <path d="M2.500 1.500l7 7M9.500 1.500l-7 7" stroke="#fff" strokeWidth="2.400" />
              </svg>
            </CaptionButton>
          </Captions>
        </TitleBar>
        <MenuBar>
          {menus.map(([name, w]) => <Fit key={name} w={w}>{name}</Fit>)}
        </MenuBar>
        <ToolBar>
          {topTools.map((group, g) => (
            <React.Fragment key={g}>
              {g > 0 && <ToolSep />}
              {group.map((Icon, i) => (
                <ToolButton key={i} $faded={disabledTools.includes(Icon)}><Icon /></ToolButton>
              ))}
            </React.Fragment>
          ))}
        </ToolBar>
        <Middle>
          <SideBar>
            {leftTools.map(([Icon, on], i) => <SideButton key={i} $on={on}><Icon /></SideButton>)}
          </SideBar>
          <CanvasFrame>
            <Schematic />
            <ScrollTrack $vertical>
              <ScrollEnd><Triangle dir="up" /></ScrollEnd>
              <ScrollGap $size={191} />
              <Thumb $vertical $size={139}><ScrollRidges vertical /></Thumb>
              <ScrollGap $size={195} />
              <ScrollEnd><Triangle dir="down" /></ScrollEnd>
            </ScrollTrack>
            <ScrollTrack>
              <ScrollEnd><Triangle dir="left" /></ScrollEnd>
              <ScrollGap $size={491} />
              <Thumb $size={198}><ScrollRidges /></Thumb>
              <ScrollGap $size={59} />
              <ScrollEnd><Triangle dir="right" /></ScrollEnd>
            </ScrollTrack>
          </CanvasFrame>
          <SideBar $side="right">
            {rightTools.map(([Icon, on], i) => <SideButton key={i} $on={on}><Icon /></SideButton>)}
          </SideBar>
        </Middle>
        <MessagePanel />
        <StatusBar>
          {statusCells.map(([text, w], i) => (
            <StatusCell key={text} $first={i === 0}>
              <Fit w={w}>{text}</Fit>
              {i === statusCells.length - 1 && <StatusGrip><Grip /></StatusGrip>}
            </StatusCell>
          ))}
        </StatusBar>
        <AnnotateDialog />
      </Window>
    </>
  );
}
